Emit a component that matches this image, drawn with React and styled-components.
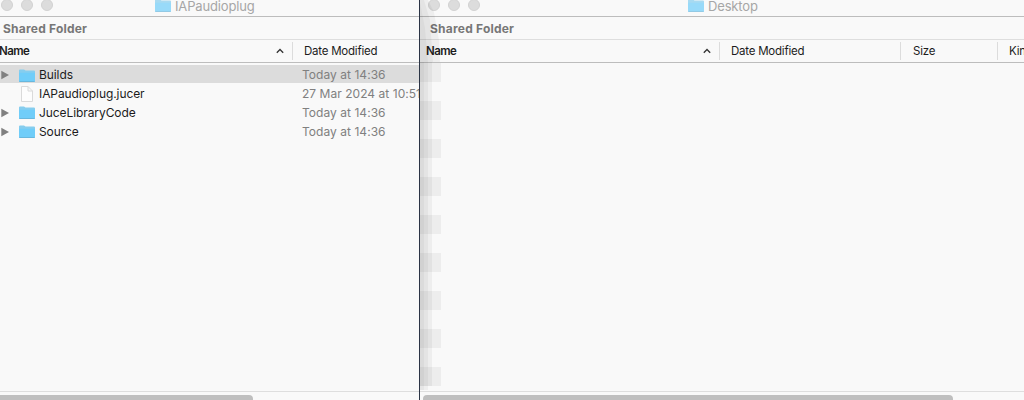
import React from "react";
import styled, { createGlobalStyle } from "styled-components";

const Global = createGlobalStyle`
  * { box-sizing: border-box; }
  body { margin: 0; background: #f9f9f9; overflow: hidden; }
`;
const Desktop = styled.main`
  display: flex;
  width: 1024px;
  height: 400px;
  overflow: hidden;
  font-family: Inter, "Liberation Sans", sans-serif;
  font-size: 12px;
  color: #1c1c1c;
`;
const Window = styled.section`
  position: relative;
  display: flex;
  flex-direction: column;
  flex: 0 0 ${(p) => p.$width}px;
  height: 400px;
  overflow: hidden;
  background: #f9f9f9;
  border-right: ${(p) => (p.$edge ? "1px solid #2b3445" : "0")};
`;
const TitleBar = styled.header`
  display: flex;
  flex: 0 0 17px;
  border-bottom: 1px solid #bdbdbd;
`;
const Lights = styled.div`
  display: flex;
  gap: 8px;
  height: 12px;
  margin: -1px 0 0 ${(p) => p.$left}px;
  flex: 0 0 ${(p) => p.$span}px;
`;
const Light = styled.span`
  width: 12px;
  height: 12px;
  border-radius: 50%;
  background: #dcdcdc;
  border: 1px solid #d2d2d2;
`;
const Title = styled.div`
  display: flex;
  gap: 4px;
  height: 16px;
  color: #a6a6a6;
  font-size: 13px;
  line-height: 16px;
  letter-spacing: -0.15px;
  white-space: nowrap;
  & svg { margin-top: -1px; opacity: 0.7; }
  & span { margin-top: -2px; }
`;
const Caption = styled.div`
  flex: 0 0 23px;
  padding: 2px 0 0 ${(p) => p.$left}px;
  border-bottom: 1px solid #dedede;
  color: #777;
  font-size: 12px;
  font-weight: 700;
  line-height: 20px;
  letter-spacing: 0.22px;
`;
const Columns = styled.div`
  display: flex;
  flex: 0 0 23px;
  border-bottom: 1px solid #bdbdbd;
  font-size: 11.5px;
  line-height: 22px;
`;
const Column = styled.div`
  display: flex;
  justify-content: space-between;
  flex: 0 0 ${(p) => p.$width}px;
  padding-left: ${(p) => p.$pad}px;
  margin-left: ${(p) => p.$shift || 0}px;
  font-weight: ${(p) => (p.$active ? 600 : 400)};
  letter-spacing: ${(p) => (p.$active ? -0.6 : -0.23)}px;
  white-space: nowrap;
  & svg { margin: 8px 8px 0 0; }
`;
const Divider = styled.i`
  flex: 0 0 1px;
  height: 18px;
  margin-top: 2px;
  background: #dcdcdc;
`;
const List = styled.div`
  display: flex;
  flex-direction: column;
  gap: ${(p) => p.$gap}px;
  flex: 1;
  min-height: 0;
  padding-top: ${(p) => p.$top}px;
`;
const Row = styled.div`
  display: grid;
  grid-template-columns: 19px 20px 263px 1fr;
  flex: 0 0 ${(p) => (p.$selected ? 18 : 19)}px;
  margin-bottom: ${(p) => (p.$selected ? 1 : 0)}px;
  padding-top: ${(p) => (p.$selected ? 2 : 0)}px;
  align-items: center;
  line-height: ${(p) => (p.$selected ? 16 : 18)}px;
  background: ${(p) => (p.$selected ? "#dcdcdc" : "transparent")};
  white-space: nowrap;
`;
const FileName = styled.span`
  letter-spacing: -0.08px;
`;
const Modified = styled.span`
  color: #808080;
  letter-spacing: 0.04px;
`;
const Band = styled.div`
  flex: 0 0 19px;
  width: 21px;
  background: #ededed;
`;
const Track = styled.footer`
  flex: 0 0 9px;
  min-height: 0;
  overflow: hidden;
  padding: 3px 0 0 ${(p) => p.$left}px;
  border-top: 1px solid #dedede;
`;
const Thumb = styled.div`
  width: ${(p) => p.$width}px;
  height: 8px;
  border-radius: ${(p) => p.$round};
  background: #bfbfbf;
`;
const Shadow = styled.div`
  position: absolute;
  inset: 0 auto 0 0;
  width: 20px;
  pointer-events: none;
  & svg { display: block; }
`;

const Folder = () => (
  <svg width="16" height="13" viewBox="0 0 16 13">
    <path d="M0 1.5Q0 .5 1 .5H5L6.5 1.5H15Q16 1.5 16 2.5V12Q16 13 15 13H1Q0 13 0 12Z" fill="#86cdee" />
    <path d="M0 3.8H16V12Q16 13 15 13H1Q0 13 0 12Z" fill="#70cdf9" />
    <path d="M.5 12.5H15.5" stroke="#68b7dd" />
  </svg>
);
const Page = () => (
  <svg width="16" height="16" viewBox="0 0 16 16">
    <path d="M2.5.5H9L13.5 5V15.5H2.5ZM9 .5V5H13.5" fill="#fdfdfd" stroke="#dadada" />
  </svg>
);
const Triangle = () => (
  <svg width="9" height="10" viewBox="0 0 9 10"><path d="M1.3 .7L9 5L1.3 9.3Z" fill="#808080" /></svg>
);
const Caret = () => (
  <svg width="8" height="6" viewBox="0 0 8 6"><path d="M.8 4.8L4 1.5L7.2 4.8" fill="none" stroke="#333" strokeWidth="1.3" /></svg>
);
const TrafficLights = ({ left, span }) => (
  <Lights $left={left} $span={span}><Light /><Light /><Light /></Lights>
);

const files = [
  { name: "Builds", date: "Today at 14:36", folder: true, selected: true },
  { name: "IAPaudioplug.jucer", date: "27 Mar 2024 at 10:51" },
  { name: "JuceLibraryCode", date: "Today at 14:36", folder: true },
  { name: "Source", date: "Today at 14:36", folder: true },
];

export default function App() {
  return (
    <Desktop>
      <Global />
      <Window $width={420} $edge>
        <TitleBar>
          <TrafficLights left={1} span={154} />
          <Title><Folder /><span>IAPaudioplug</span></Title>
        </TitleBar>
        <Caption $left={3}>Shared Folder</Caption>
        <Columns>
          <Column $width={293} $shift={-1} $pad={0} $active>Name<Caret /></Column>
          <Divider />
          <Column $width={126} $pad={11}>Date Modified</Column>
        </Columns>
        <List $gap={0} $top={2}>
          {files.map((f) => (
            <Row key={f.name} $selected={f.selected}>
              {f.folder ? <Triangle /> : <span />}
              {f.folder ? <Folder /> : <Page />}
              <FileName>{f.name}</FileName>
              <Modified>{f.date}</Modified>
            </Row>
          ))}
        </List>
        <Track $left={0}><Thumb $width={253} $round="0 4px 4px 0" /></Track>
      </Window>
      <Window $width={604}>
        <TitleBar>
          <TrafficLights left={8} span={260} />
          <Title><Folder /><span>Desktop</span></Title>
        </TitleBar>
        <Caption $left={10}>Shared Folder</Caption>
        <Columns>
          <Column $width={299} $pad={6} $active>Name<Caret /></Column>
          <Divider />
          <Column $width={180} $pad={11}>Date Modified</Column>
          <Divider />
          <Column $width={96} $pad={12}>Size</Column>
          <Divider />
          <Column $width={60} $pad={11}>Kind</Column>
        </Columns>
        <List $gap={19} $top={0}>
          {Array.from({ length: 9 }, (_, i) => <Band key={i} />)}
        </List>
        <Track $left={3}><Thumb $width={530} $round="4px" /></Track>
        <Shadow>
          <svg width="20" height="400" viewBox="0 0 20 400">
            <path d="M0 0H8L14 12L19 40L20 62H12V386H0Z" fill="#000" opacity=".045" />
            <path d="M0 0H4L10 20L13 62H8V390H0Z" fill="#000" opacity=".04" />
            <path d="M0 2L5 28L8 62H4V390H0Z" fill="#000" opacity=".035" />
          </svg>
        </Shadow>
      </Window>
    </Desktop>
  );
}
